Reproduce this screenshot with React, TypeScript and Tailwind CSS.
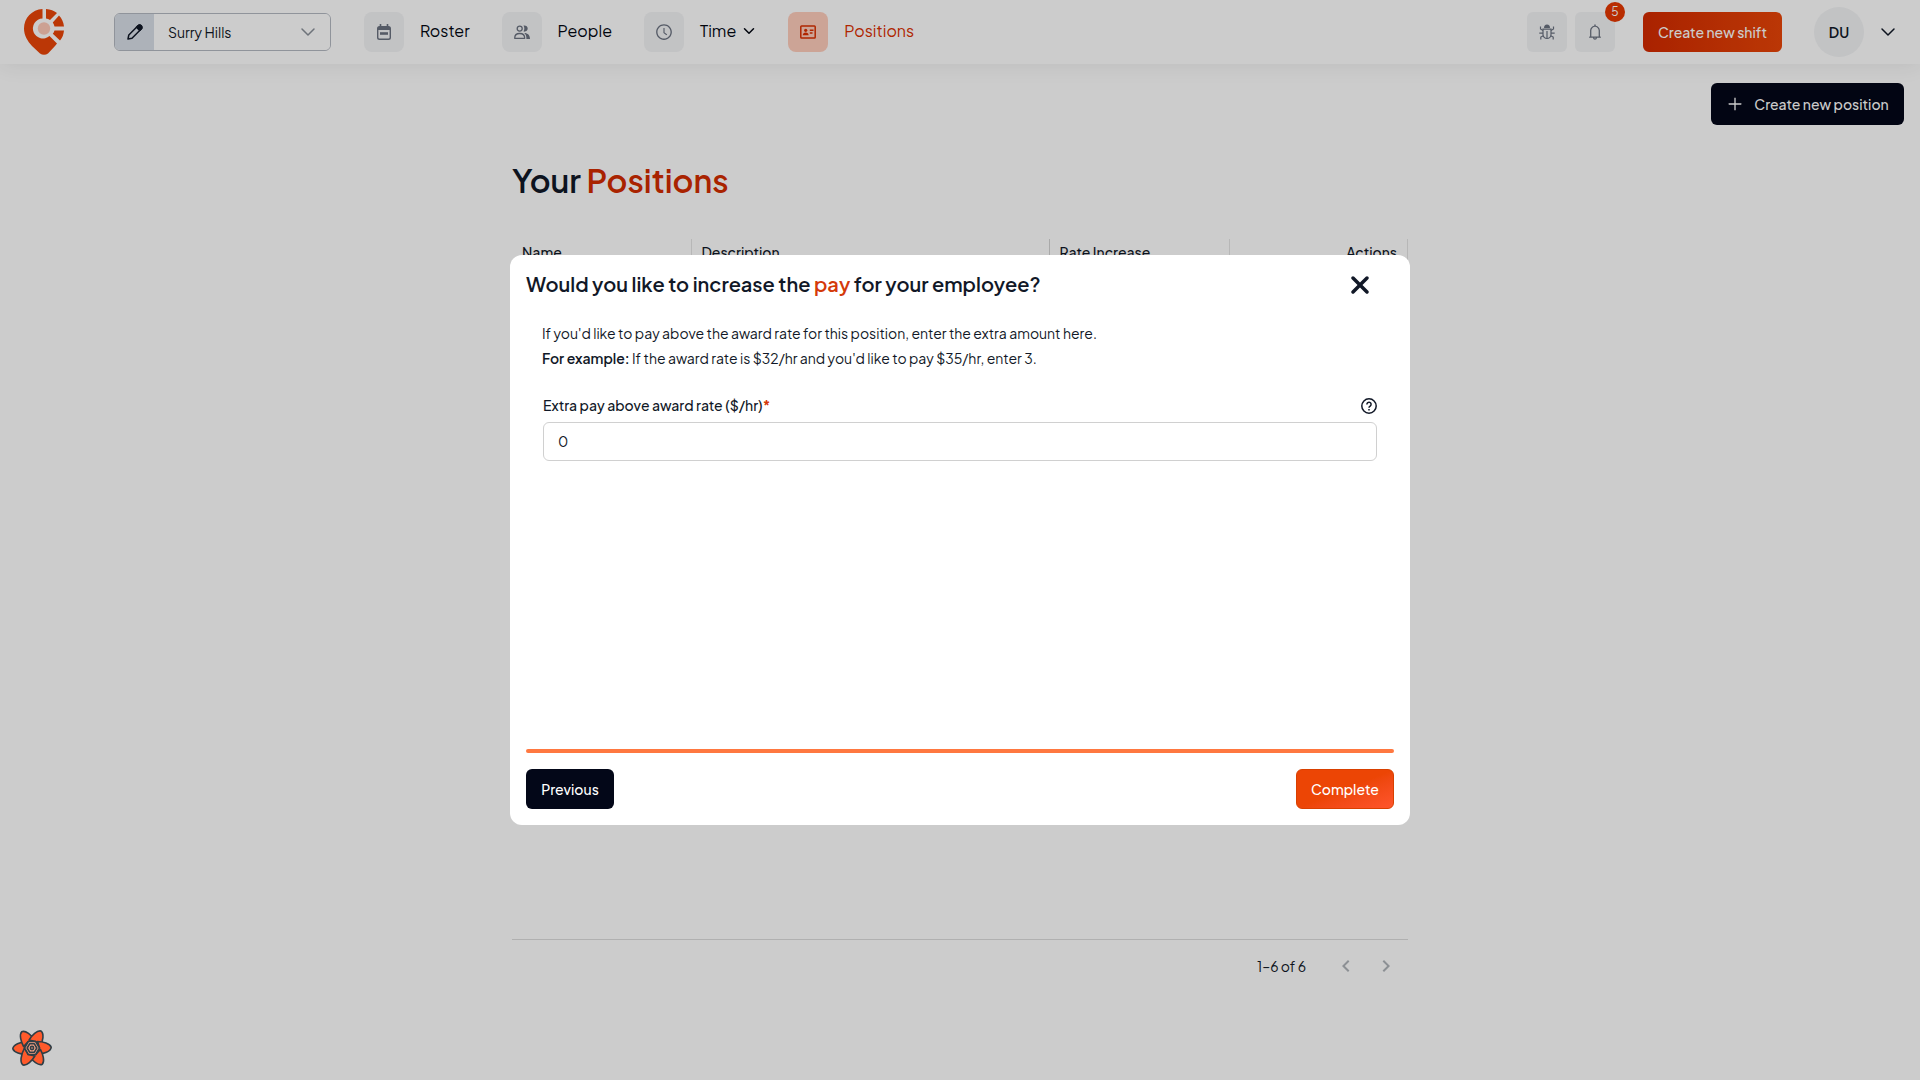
import type { ReactNode } from 'react';
import { AiOutlineBell, AiOutlineClockCircle, AiOutlinePlus } from 'react-icons/ai';
import { MdChevronLeft, MdChevronRight } from 'react-icons/md';
import { FaXmark } from 'react-icons/fa6';
import { ChevronDown } from 'lucide-react';

const Logo = () => (
    <svg className="h-[46px] w-10" viewBox="0 0 40 46" fill="none">
        <path
            d="M18.500 0C8 .6 0 9 0 19.500c0 7 3.500 12.500 8 17.500l8 7.500c2.500 1.800 5.500 1.800 8 0l7-7.500 2-2.500-7.500-7.500A10 10 0 1 1 18.500 9.500z"
            fill="#ea4508"
        />
        <path d="M22 0c4.500.3 8 1.600 11 4l-7 7c-1.200-.8-2.600-1.300-4-1.500z" fill="#ea4508" />
        <path d="M35 6.500c2.800 3 4.500 6.500 5 11H30.500c-.3-1.500-.8-2.800-1.700-4z" fill="#ea4508" />
        <path d="M40 21.500c-.4 4-1.500 7-4 10l-7.200-6.800c.8-1 1.400-2 1.700-3.200z" fill="#ea4508" />
        <circle cx="20" cy="19.500" r="6.200" fill="#ffcab8" />
    </svg>
);

const PencilIcon = () => (
    <svg className="h-4 w-4" viewBox="0 0 16 16" fill="none" stroke="#111827" strokeWidth="1.500" strokeLinejoin="round">
        <path d="M1 15l.8-4L11 1.800a2 2 0 0 1 3.200 3.200L5 14.200z" />
        <path d="M9.500 3.300L11 1.800a2 2 0 0 1 3.200 3.200l-1.500 1.500z" fill="#111827" />
    </svg>
);

const RosterIcon = () => (
    <svg className="h-4 w-4" viewBox="0 0 16 16" fill="none" stroke="currentColor" strokeWidth="1.400">
        <rect x="1.700" y="2.700" width="12.600" height="12.600" rx="1.800" />
        <path d="M2 3h12v3H2z" fill="currentColor" stroke="none" />
        <path d="M4.500 0v3M11.500 0v3" strokeWidth="1.600" />
        <path d="M4 9.500h8" strokeWidth="2.600" />
    </svg>
);

const PeopleIcon = () => (
    <svg className="h-4 w-4" viewBox="0 0 16 16" fill="none" stroke="currentColor" strokeWidth="1.300">
        <circle cx="5.700" cy="4.600" r="2.500" />
        <path d="M.7 14.300c0-3.200 2.200-4.800 5-4.800s5 1.600 5 4.800z" strokeLinejoin="round" />
        <path d="M9.500 1.600c2.400-.4 4.200 1 4.200 3s-1.800 3.400-4.200 3c1.100-1.700 1.100-4.300 0-6z" fill="currentColor" stroke="none" />
        <path d="M10.300 8.900c3.500 0 5.700 2.200 5.700 6h-3.600c.1-2.600-.5-4.500-2.100-6z" fill="currentColor" stroke="none" />
    </svg>
);

const CardIcon = () => (
    <svg className="h-4 w-4" viewBox="0 0 16 16" fill="none" stroke="currentColor" strokeWidth="1.500">
        <rect x=".8" y="2" width="14.400" height="12" rx=".8" />
        <circle cx="5.700" cy="6.300" r="1.600" fill="currentColor" stroke="none" />
        <path d="M2.800 11.300c0-1.900 1.200-2.800 2.900-2.800s2.900.9 2.900 2.800z" fill="currentColor" stroke="none" />
        <path d="M9.800 6.200h3.700M9.800 9h2.700" strokeWidth="1.400" />
    </svg>
);

const BugIcon = () => (
    <svg className="h-4 w-4" viewBox="0 0 16 16" fill="none" stroke="currentColor" strokeWidth="1.200">
        <path d="M5 4a3 3.600 0 0 1 6 0z" fill="currentColor" stroke="none" />
        <path d="M4 5.200h8v5.300a4 4 0 0 1-8 0z" />
        <path d="M8 7v7.500" />
        <path d="M4 6.500L1.500 5V2.500M12 6.500L14.500 5V2.500M4 9.200H.3M12 9.200h3.700M4.300 11.700L1.800 13v2.500M11.700 11.700l2.500 1.300v2.500" />
    </svg>
);

const HelpIcon = () => (
    <svg className="mt-0.5 h-4 w-4" viewBox="0 0 16 16" fill="none" stroke="currentColor" strokeWidth="1.500">
        <circle cx="8" cy="8" r="7.200" />
        <path d="M5.900 6.400a2.100 2.100 0 1 1 3.500 1.500C8.600 8.500 8 8.800 8 9.800M8 11v1.600" />
    </svg>
);

const petals = [0, 60, 120, 180, 240, 300];

const FlowerIcon = () => (
    <svg className="h-10 w-10" viewBox="-20 -20 40 40">
        <g stroke="#2f3e46" strokeWidth="1.600" strokeLinejoin="round">
            {petals.map((angle) => (
                <path
                    key={angle}
                    d="M-5.500 6.500C-11 6.500-18 4.500-19.200.8C-19-3-12-6.500-3.500-6.500L-7.500 0z"
                    fill="#ff5a2b"
                    transform={`rotate(${angle})`}
                />
            ))}
            <path d="M-7.500 0L-3.700-6.500H3.700L7.500 0L3.700 6.500H-3.700z" fill="#f5a184" />
            <path d="M-4.800 0L-2.400-4.200H2.400L4.800 0L2.400 4.200H-2.400z" fill="#f5a184" />
            <circle r="1.600" fill="#f5a184" />
        </g>
    </svg>
);

type NavItemProps = {
    icon: ReactNode;
    label: string;
    active?: boolean;
    menu?: boolean;
};

const NavItem = ({ icon, label, active, menu }: NavItemProps) => (
    <a href="#" className={`flex items-center gap-4 ${active ? 'text-[#dc3000]' : 'text-[#030712]'}`}>
        <span
            className={`flex h-10 w-10 items-center justify-center rounded-lg ${
                active ? 'bg-[#ffcdbc] text-[#dc3000]' : 'bg-[#f3f4f6] text-[#6b7280]'
            }`}
        >
            {icon}
        </span>
        <span className="flex items-center gap-1 pb-0.5">
            {label}
            {menu && <ChevronDown className="-mr-0.5 h-[18px] w-[18px]" />}
        </span>
    </a>
);

const Header = () => (
    <header className="relative flex h-16 items-center bg-white pr-5 pl-6 shadow-[0_2px_20px_rgba(0,0,0,0.07)]">
        <Logo />
        <div className="ml-[50px] flex h-[38px] w-[217px] overflow-hidden rounded-md border border-[#b4b9c2]">
            <button aria-label="Edit location" className="flex w-[39px] items-center justify-center bg-[#d9dfe8]">
                <PencilIcon />
            </button>
            <div className="relative flex-1">
                <select aria-label="Location" className="h-full w-full appearance-none bg-white pl-3.5 text-sm text-[#111827]">
                    <option>Surry Hills</option>
                </select>
                <ChevronDown className="pointer-events-none absolute top-1.5 right-2.5 h-6 w-6 text-[#8a9099]" strokeWidth={1.5} />
            </div>
        </div>

        <nav className="ml-[33px] flex items-center gap-8 text-base">
            <NavItem icon={<RosterIcon />} label="Roster" />
            <NavItem icon={<PeopleIcon />} label="People" />
            <NavItem icon={<AiOutlineClockCircle className="h-[18px] w-[18px]" />} label="Time" menu />
            <NavItem icon={<CardIcon />} label="Positions" active />
        </nav>

        <div className="ml-auto flex items-center">
            <button aria-label="Report a bug" className="flex h-10 w-10 items-center justify-center rounded-md bg-[#f3f4f6] text-[#6b7280]">
                <BugIcon />
            </button>
            <button aria-label="Notifications" className="relative ml-2 flex h-10 w-10 items-center justify-center rounded-md bg-[#f3f4f6] text-[#6b7280]">
                <AiOutlineBell className="h-[18px] w-[18px]" />
                <span className="absolute -top-2.5 -right-2.5 flex h-5 w-5 items-center justify-center rounded-full bg-[#e63700] text-xs text-white">
                    5
                </span>
            </button>
            <button className="ml-7 h-10 w-[139px] rounded-md bg-gradient-to-r from-[#d42a00] to-[#ea4508] text-sm font-medium text-white">
                Create new shift
            </button>
            <button className="ml-8 flex items-center gap-3 text-sm font-semibold text-[#111827]">
                <span className="flex h-[50px] w-[50px] items-center justify-center rounded-full bg-[#f3f4f6]">DU</span>
                <ChevronDown className="h-6 w-6" strokeWidth={1.5} />
            </button>
        </div>
    </header>
);

const PositionsPage = () => (
    <main className="px-4 pt-[19px]">
        <div className="flex justify-end">
            <button className="flex h-[42px] w-[193px] items-center justify-center gap-2.5 rounded-md bg-[#030718] text-sm font-medium text-white">
                <AiOutlinePlus className="h-[18px] w-[18px]" />
                Create new position
            </button>
        </div>

        <div className="mx-auto max-w-4xl">
            <h1 className="mt-8 text-[32px] leading-[46px] font-semibold text-[#111827]">
                Your <span className="text-[#d42c00]">Positions</span>
            </h1>
            <div className="mt-9 h-[701px] border-b border-[#dddddd]">
                <table className="w-full table-fixed text-left text-sm text-[#111827]">
                    <thead>
                        <tr className="h-7">
                            <th className="w-[179px] border-r border-[#e5e5e5] px-2.5 pb-0.5 font-medium">Name</th>
                            <th className="w-[358px] border-r border-[#d4d4d4] px-2.5 pb-0.5 font-medium">Description</th>
                            <th className="w-[180px] border-r border-[#e5e5e5] px-2.5 pb-0.5 font-medium">Rate Increase</th>
                            <th className="border-r border-[#e5e5e5] px-2.5 pb-0.5 text-right font-medium">Actions</th>
                        </tr>
                    </thead>
                </table>
            </div>
            <div className="mt-1.5 flex h-10 items-center justify-end pr-0.5 text-sm text-[#111827]">
                1–6 of 6
                <button aria-label="Previous page" className="ml-5 flex h-10 w-10 items-center justify-center text-[#b0b4ba]">
                    <MdChevronLeft className="h-6 w-6" />
                </button>
                <button aria-label="Next page" className="flex h-10 w-10 items-center justify-center text-[#b0b4ba]">
                    <MdChevronRight className="h-6 w-6" />
                </button>
            </div>
        </div>
    </main>
);

const PayDialog = () => (
    <div className="fixed inset-0 flex items-center justify-center bg-black/20">
        <div
            role="dialog"
            aria-labelledby="pay-title"
            className="flex min-h-[570px] w-full max-w-[900px] flex-col rounded-xl bg-white p-4 text-sm text-[#111827]"
        >
            <div className="flex h-7 items-center justify-between pr-5">
                <h2 id="pay-title" className="pb-0.5 text-xl font-semibold">
                    Would you like to increase the <span className="text-[#d43a0a]">pay</span> for your employee?
                </h2>
                <button aria-label="Close">
                    <FaXmark className="h-7 w-7" />
                </button>
            </div>

            <div className="mt-[22px] flex-1 px-4">
                <p className="leading-[25px]">If you'd like to pay above the award rate for this position, enter the extra amount here.</p>
                <p className="leading-[25px]">
                    <strong className="font-semibold">For example:</strong> If the award rate is $32/hr and you'd like to pay $35/hr, enter 3.
                </p>
                <div className="mx-px mt-6">
                    <div className="flex h-5 items-center justify-between">
                        <label htmlFor="extra-pay" className="font-medium">
                            Extra pay above award rate ($/hr)<span className="font-bold text-[#d43a0a]">*</span>
                        </label>
                        <HelpIcon />
                    </div>
                    <input
                        id="extra-pay"
                        type="text"
                        defaultValue="0"
                        className="mt-[7px] h-[39px] w-full rounded-md border border-[#d0d0d0] px-3.5 pb-0.5"
                    />
                </div>
            </div>

            <div className="h-1 rounded-sm bg-[#ff7840]" />
            <div className="mt-4 flex justify-between font-medium text-white">
                <button className="h-10 w-[88px] rounded-md bg-[#030718]">Previous</button>
                <button className="h-10 w-[98px] rounded-md border border-[#d94000] bg-gradient-to-br from-[#ec4505] from-50% to-[#ff552b]">
                    Complete
                </button>
            </div>
        </div>
    </div>
);

const App = () => {
    return (
        <div className="min-h-screen bg-white font-['Plus_Jakarta_Sans',Inter,sans-serif]">
            <Header />
            <PositionsPage />
            <PayDialog />
            <button aria-label="Open query devtools" className="fixed bottom-3 left-3">
                <FlowerIcon />
            </button>
        </div>
    );
};

export default App;
